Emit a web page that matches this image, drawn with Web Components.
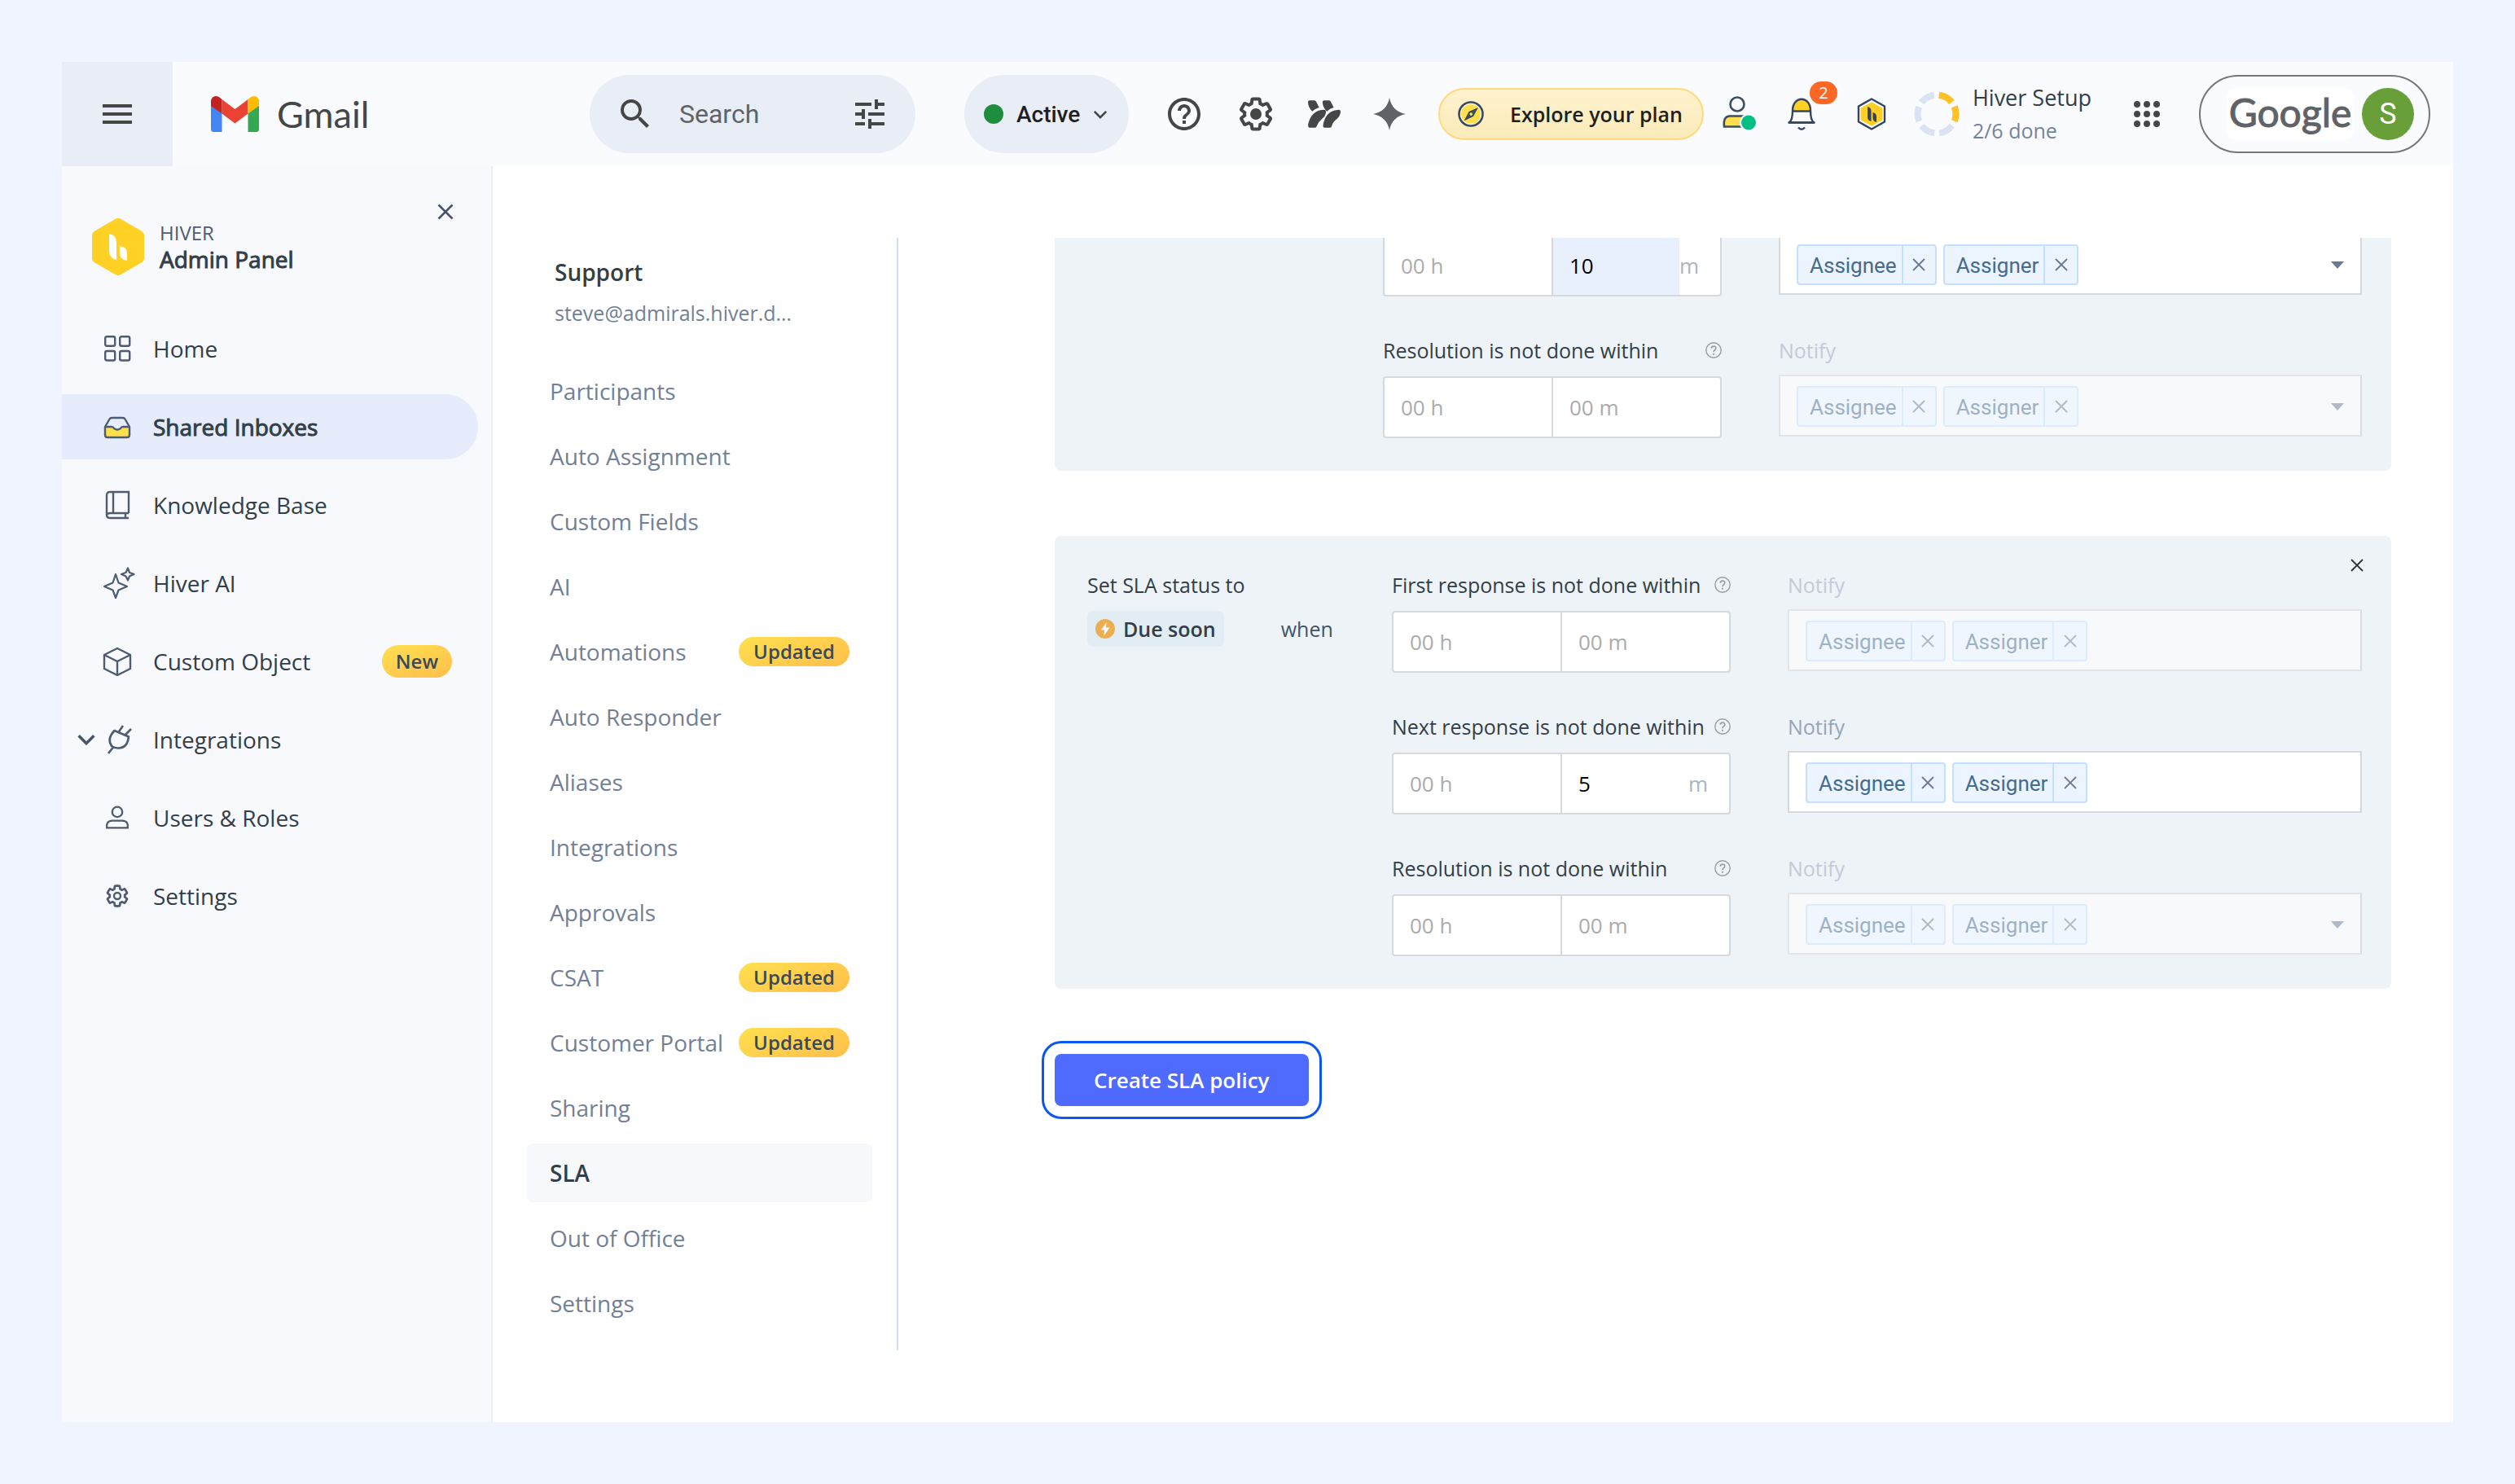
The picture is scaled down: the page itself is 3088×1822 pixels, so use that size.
<!DOCTYPE html>
<html lang="en">
<head>
<meta charset="utf-8">
<title>SLA - Hiver Admin Panel</title>
<style>
    html {
        height: 100%;
    }
    body {
        margin: 0;
        padding: 76px;
        min-height: 100%;
        box-sizing: border-box;
        display: flex;
        flex-direction: column;
        background: #eff4ff;
        font-family: "Open Sans", "Noto Sans", sans-serif;
        font-size: 28px;
        color: #333e48;
    }
</style>
</head>
<body>
<admin-app></admin-app>

<script>
const icons = {
    menu: ['0 0 36 24', '<path d="M0 0h36v4H0zM0 10h36v4H0zM0 20h36v4H0z" fill="currentColor"/>'],
    gmail: ['0 0 59 44', `
        <path d="M0 11v29.500q0 3.500 3.500 3.500H13.500V21z" fill="#4285f4"/>
        <path d="M59 11v29.500q0 3.500-3.500 3.500H45.500V21z" fill="#34a853"/>
        <path d="M13.500 4 29.500 16 45.500 4V21.500L29.500 33.500 13.500 21.500z" fill="#ea4335"/>
        <path d="M0 12V6.500C0 1 6-2 10.500 1.500L13.500 4V21.500z" fill="#c5221f"/>
        <path d="M59 12V6.500C59 1 53-2 48.500 1.500L45.500 4V21.500z" fill="#fbbc04"/>`],
    search: ['0 0 24 24', '<path fill="currentColor" d="M15.500 14h-.79l-.28-.27A6.471 6.471 0 0 0 16 9.500 6.500 6.500 0 1 0 9.500 16c1.610 0 3.090-.59 4.230-1.570l.27.28v.79l5 4.990L20.490 19l-4.990-5zm-6 0C7.010 14 5 11.990 5 9.500S7.010 5 9.500 5 14 7.010 14 9.500 11.990 14 9.500 14z"/>'],
    tune: ['0 0 24 24', '<path fill="currentColor" d="M3 17v2h6v-2H3zM3 5v2h10V5H3zm10 16v-2h8v-2h-8v-2h-2v6h2zM7 9v2H3v2h4v2h2V9H7zm14 4v-2H11v2h10zm-6-4h2V7h4V5h-4V3h-2v6z"/>'],
    chevron: ['0 0 20 12', '<path d="M2 2l8 8 8-8" fill="none" stroke="currentColor" stroke-width="3"/>'],
    help: ['0 0 24 24', '<path fill="currentColor" d="M11 18h2v-2h-2v2zm1-16C6.480 2 2 6.480 2 12s4.480 10 10 10 10-4.480 10-10S17.520 2 12 2zm0 18c-4.410 0-8-3.590-8-8s3.590-8 8-8 8 3.590 8 8-3.590 8-8 8zm0-14c-2.210 0-4 1.790-4 4h2c0-1.100.9-2 2-2s2 .9 2 2c0 2-3 1.750-3 5h2c0-2.250 3-2.500 3-5 0-2.210-1.790-4-4-4z"/>'],
    hint: ['0 0 20 20', '<circle cx="10" cy="10" r="9.200" fill="none" stroke="#9b9b9b" stroke-width="1.400"/><path d="M7.300 7.800C7.300 4.300 12.800 4.300 12.800 7.600 12.800 9.800 10 9.600 10 12.200" fill="none" stroke="#9b9b9b" stroke-width="1.600"/><circle cx="10" cy="14.800" r="1.100" fill="#9b9b9b"/>'],
    gear: ['0 0 24 24', '<path fill="currentColor" d="GEAR"/><circle cx="12" cy="12" r="3.500" fill="currentColor"/>'],
    settings: ['0 0 24 24', '<path fill="currentColor" d="GEAR"/><circle cx="12" cy="12" r="3" fill="none" stroke="currentColor" stroke-width="1.800"/>'],
    chevrons: ['0 0 38 32', `<g fill="currentColor">
        <path d="M0 2Q0 0 2 0H7.500Q9 0 9.500 1.500L13 8.500Q8.500 9.500 5 13Q0 8 0 2z"/>
        <path d="M17 2Q17 0 19 0H24.500Q26 0 26.500 1.500L30 8.500Q25.500 9.500 22 13Q17 8 17 2z"/>
        <path d="M1.500 32Q-1 31 1 25Q5 11.500 19 11Q22 11 20.500 16Q20 19 16 22Q12 25 10 30.500Q9.500 32 8 32z"/>
        <path d="M19 32Q16.500 31 18.500 25Q22 12 36 11Q38 11 38 13Q38 18 33.500 22Q29 25 27.500 30.500Q27 32 25.500 32z"/></g>`],
    spark: ['0 0 40 40', '<path fill="#5f6368" d="M20 0C22 11 29 18 40 20C29 22 22 29 20 40C18 29 11 22 0 20C11 18 18 11 20 0z"/>'],
    compass: ['0 0 32 32', '<circle cx="16" cy="16" r="14.500" fill="#fff" stroke="#3c4a5e" stroke-width="2.600"/><circle cx="16" cy="16" r="12" fill="#ffe04b"/><path fill="#3c4a5e" fill-rule="evenodd" d="M25 8L19 19 7.500 24.500 13.500 13zM16.200 14.200a1.800 1.800 0 1 0 .1 0z"/>'],
    person: ['0 0 48 48', `
        <circle cx="21" cy="12" r="8.500" fill="none" stroke="#3d4d63" stroke-width="2.600"/>
        <path d="M5 39.500Q3.500 26.500 12 26.500H30Q38 26.500 37 39.500z" fill="#ffe04b" stroke="#3d4d63" stroke-width="2.600"/>
        <circle cx="35" cy="34.500" r="11" fill="#f9fbff"/><circle cx="35" cy="34.500" r="9" fill="#03bf83"/>`],
    bell: ['0 0 40 40', `
        <path d="M9 16C9-3 31-3 31 16z" fill="#ffd124"/>
        <path d="M9 16C9-3 31-3 31 16Q31 27 35 30.500H5Q9 27 9 16zM9 16.500H31" fill="none" stroke="#34465f" stroke-width="2.400" stroke-linejoin="round"/>
        <path d="M3.500 30.500H36.500M16 36.500Q20 41 24 36.500" fill="none" stroke="#34465f" stroke-width="2.400"/>`],
    hexline: ['0 0 38 42', `
        <path d="M19 2.500L35 11.500V30.500L19 39.500L3 30.500V11.500z" fill="#fff" stroke="#34465f" stroke-width="2.400" stroke-linejoin="round"/>
        <path d="M19 8L31 14.500V27.500L19 34L7 27.500V14.500z" fill="#ffcf24" stroke="#ffcf24" stroke-width="3" stroke-linejoin="round"/>
        <path d="M14 12Q18.500 13 18.500 17V30Q14 29 14 25zM20.500 19Q25 20 25 24V31Q20.500 30 20.500 26z" fill="#34465f"/>`],
    hiver: ['0 0 66 70', `
        <path d="M33 7L58 21.500V48.500L33 63L8 48.500V21.500z" fill="#ffd124" stroke="#ffd124" stroke-width="14" stroke-linejoin="round"/>
        <path d="M22 19Q31 20 31 31V51Q22 49 22 40zM35 34Q44 35 44 43V52Q35 51 35 43z" fill="#fff"/>`],
    ring: ['0 0 56 56', `<g fill="none" stroke-width="8" transform="rotate(-83 28 28)">
        <circle cx="28" cy="28" r="23.500" pathLength="60" stroke="#dae2f3" stroke-dasharray="7.500 2.500"/>
        <circle cx="28" cy="28" r="23.500" pathLength="60" stroke="#ffc224" stroke-dasharray="7.500 2.500 7.500 42.500"/></g>`],
    apps: ['0 0 32 32', '<g fill="currentColor">' + [4, 16, 28].map(y => [4, 16, 28].map(x => `<circle cx="${x}" cy="${y}" r="4"/>`).join('')).join('') + '</g>'],
    close: ['0 0 20 20', '<path d="M1.500 1.500l17 17M18.500 1.500l-17 17" stroke="currentColor" stroke-width="2.600"/>'],
    thin: ['0 0 16 16', '<path d="M1 1l14 14M15 1L1 15" stroke="currentColor" stroke-width="1.800"/>'],
    home: ['0 0 36 36', '<g fill="none" stroke="currentColor" stroke-width="2.400"><rect x="3.200" y="3.200" width="12" height="11.500" rx="2"/><rect x="21.200" y="3.200" width="12" height="11.500" rx="2"/><rect x="3.200" y="21" width="12" height="11.500" rx="2"/><rect x="21.200" y="21" width="12" height="11.500" rx="2"/></g>'],
    inbox: ['0 0 36 36', '<path d="M3 18h9q2 4 6 4t6-4h9v10q0 3-3 3H6q-3 0-3-3z" fill="#ffe04b"/><path d="M3 18L8.500 8.500Q9.500 7 11 7H25Q26.500 7 27.500 8.500L33 18V28Q33 31 30 31H6Q3 31 3 28zM3 18h8q2 0 3 2 4 3 8 0 1-2 3-2h8" fill="none" stroke="currentColor" stroke-width="2.400" stroke-linejoin="round"/>'],
    book: ['0 0 36 36', '<path d="M32 28V2H9Q5 2 5 6V30Q5 34 9 34H32M32 28H9Q5 28 5 31M13 2V28M28 28V34" fill="none" stroke="currentColor" stroke-width="2.400"/>'],
    sparkles: ['0 0 40 40', '<g fill="none" stroke="currentColor" stroke-width="2.200" stroke-linejoin="round"><path d="M16 9L19.500 19.500 30 24 19.500 28.500 16 38 12.500 28.500 2 24 12.500 19.500z"/><path d="M31 1.500L33 7 38.500 9 33 11.500 31 16.500 28.500 11.500 23 9 28.500 7z"/></g>'],
    box: ['0 0 36 36', '<path d="M18 2L34 10V27L18 35L2 27V10zM2 10L18 18L34 10M18 18V35" fill="none" stroke="currentColor" stroke-width="2.400" stroke-linejoin="round"/>'],
    plug: ['0 0 36 36', '<path d="M14.500 7L32 14.500Q30.500 28 20 28.500Q15 29 11 26Q5 17 14.500 7zM19.500 9L25 1M28 12L35 5M13 27.500L7 35" fill="none" stroke="currentColor" stroke-width="2.600" stroke-linejoin="round"/>'],
    user: ['0 0 36 36', '<g fill="none" stroke="currentColor" stroke-width="2.600"><circle cx="18" cy="10" r="7"/><path d="M3.500 32Q2.500 22 11 22H25Q33.500 22 32.500 32z" stroke-linejoin="round"/></g>'],
    bolt: ['0 0 24 24', '<circle cx="12" cy="12" r="12" fill="#edae52"/><path d="M13.500 4L7 13.500H11L10.500 20.500L17.500 10.500H13z" fill="#fff"/>'],
    caret: ['0 0 16 9', '<path d="M0 0h16L8 9z" fill="currentColor"/>'],
};

const gearPath = 'M13.850 22.250h-3.700c-.74 0-1.360-.54-1.450-1.270l-.27-1.890c-.27-.14-.53-.29-.79-.46l-1.800.72c-.7.26-1.470-.03-1.810-.65L2.200 15.530c-.35-.66-.2-1.440.36-1.880l1.530-1.190c-.01-.15-.02-.3-.02-.46 0-.15.010-.31.020-.46l-1.520-1.190c-.59-.45-.74-1.260-.37-1.880l1.850-3.190c.34-.62 1.110-.9 1.790-.63l1.810.73c.26-.17.52-.32.78-.46l.27-1.910c.09-.7.71-1.250 1.440-1.250h3.700c.74 0 1.360.54 1.450 1.270l.27 1.890c.27.14.53.29.79.46l1.800-.72c.71-.26 1.480.03 1.820.65l1.840 3.180c.36.66.2 1.440-.36 1.880l-1.520 1.190c.01.15.02.3.02.46s-.01.31-.02.46l1.520 1.190c.56.45.72 1.230.37 1.860l-1.860 3.220c-.34.62-1.110.9-1.800.63l-1.800-.72c-.26.17-.52.32-.78.46l-.27 1.910c-.1.68-.72 1.220-1.460 1.220zm-3.230-2h2.760l.37-2.550.53-.22c.44-.18.88-.44 1.340-.78l.45-.34 2.380.96 1.380-2.400-2.030-1.580.07-.56c.03-.26.06-.51.06-.78s-.03-.53-.06-.78l-.07-.56 2.030-1.580-1.390-2.400-2.390.96-.45-.35c-.42-.32-.87-.58-1.330-.77l-.52-.22-.37-2.550h-2.760l-.37 2.550-.53.21c-.44.19-.88.44-1.340.79l-.45.33-2.380-.95-1.390 2.390 2.030 1.580-.07.56a7 7 0 0 0-.06.79c0 .26.02.53.06.78l.07.56-2.030 1.580 1.380 2.400 2.390-.96.45.35c.43.33.86.58 1.330.77l.53.22.38 2.550z';

function icon(name, width, height = width) {
    const [box, body] = icons[name];
    return `<svg class="icon" width="${width}" height="${height}" viewBox="${box}" aria-hidden="true">${body.replace('GEAR', gearPath)}</svg>`;
}

// shared by every shadow root
const baseStyle = `
    * { box-sizing: border-box; }
    svg { display: block; flex: none; }
    a { color: inherit; text-decoration: none; }
    button {
        margin: 0;
        padding: 0;
        border: 0;
        background: none;
        color: inherit;
        font: inherit;
        cursor: pointer;
    }
`;

class BaseElement extends HTMLElement {
    connectedCallback() {
        if (this.shadowRoot) return;
        this.attachShadow({mode: 'open'}).innerHTML = `<style>${baseStyle}${this.styles()}</style>${this.render()}`;
    }
}

customElements.define('pill-badge', class extends BaseElement {
    styles() {
        return `
        :host {
            display: block;
            flex: none;
            padding: 0 18px;
            border-radius: 20px;
            background: linear-gradient(160deg, #ffe04f, #ffbf4a);
            color: #3a4a58;
            font-size: 24px;
            font-weight: 600;
            line-height: 36px;
        }
        :host([tall]) {
            padding: 0 17px;
            line-height: 40px;
        }`;
    }
    render() {
        return `<slot></slot>`;
    }
});

customElements.define('app-header', class extends BaseElement {
    styles() {
        return `
        :host {
            display: flex;
            align-items: center;
            height: 128px;
            padding-right: 28px;
            background: #f9fbff;
            color: #444746;
            font-family: Roboto, sans-serif;
        }
        .menu {
            width: 136px;
            height: 128px;
            background: #e9eef6;
            display: grid;
            place-items: center;
        }
        .logo {
            flex: 1;
            display: flex;
            align-items: center;
            gap: 22px;
            padding-left: 47px;
            font: 45px Lato, sans-serif;
        }
        .search {
            width: 400px;
            height: 96px;
            display: flex;
            align-items: center;
            padding: 0 32px;
            border-radius: 48px;
            background: #e9eef6;
        }
        .search input {
            flex: 1;
            min-width: 0;
            margin-left: 30px;
            padding: 0;
            border: 0;
            background: none;
            font: 32px Roboto, sans-serif;
        }
        .search input::placeholder { color: #5f6368; opacity: 1; }
        .status {
            height: 96px;
            width: 202px;
            margin-left: 60px;
            padding: 0 24px;
            display: flex;
            align-items: center;
            gap: 16px;
            border-radius: 48px;
            background: #e9eef6;
            color: #1f1f1f;
            font-weight: 500;
            font-size: 28px;
        }
        .status i {
            width: 24px;
            height: 24px;
            border-radius: 50%;
            background: #1e8e3e;
        }
        .status svg { color: #444746; }
        .tools {
            display: flex;
            align-items: center;
            gap: 40px;
            margin-left: 44px;
        }
        .plan {
            height: 64px;
            padding: 0 24px 0 22px;
            display: flex;
            align-items: center;
            gap: 32px;
            border: 2px solid #ffd97c;
            border-radius: 32px;
            background: linear-gradient(#fff2ce, #fbebb9);
            color: #1f1f1f;
            font: 600 25px "Open Sans", sans-serif;
        }
        .extras {
            display: flex;
            align-items: center;
            gap: 32px;
            margin: 0 52px 0 20px;
        }
        .bell {
            position: relative;
            margin-right: 14px;
        }
        .bell span {
            position: absolute;
            left: 30px;
            top: -20px;
            width: 34px;
            border-radius: 14px;
            background: #fd6726;
            color: #fff;
            font: 20px/28px "Open Sans", sans-serif;
            text-align: center;
        }
        .setup {
            display: flex;
            align-items: center;
            gap: 16px;
            font: 27px/40px "Open Sans", sans-serif;
            color: #333e48;
        }
        .setup small {
            display: block;
            font-size: 25px;
            color: #75839b;
        }
        .account {
            height: 96px;
            margin-left: 48px;
            padding: 0 18px 0 32px;
            display: flex;
            align-items: center;
            gap: 10px;
            border: 2px solid #757775;
            border-radius: 48px;
        }
        .brand {
            width: 156px;
            height: 64px;
            border-radius: 12px;
            background: #fff;
            color: #5f6368;
            font: 48px/60px Lato, sans-serif;
            -webkit-text-stroke: 1px #5f6368;
            text-align: center;
        }
        .avatar {
            width: 64px;
            border-radius: 50%;
            background: #689f38;
            color: #fff;
            font-size: 36px;
            line-height: 64px;
            text-align: center;
        }`;
    }
    render() {
        return `
        <button class="menu" aria-label="Main menu">${icon('menu', 36, 24)}</button>
        <a class="logo" href="#">${icon('gmail', 59, 44)}<span>Gmail</span></a>
        <form class="search" role="search">
            ${icon('search', 48)}
            <input type="text" placeholder="Search" aria-label="Search">
            <button type="button" aria-label="Search options">${icon('tune', 48)}</button>
        </form>
        <button class="status"><i></i>Active${icon('chevron', 18, 11)}</button>
        <div class="tools">
            <button aria-label="Support">${icon('help', 48)}</button>
            <button aria-label="Settings">${icon('gear', 48)}</button>
            <button aria-label="Shortcuts">${icon('chevrons', 40, 34)}</button>
            <button aria-label="Ask AI">${icon('spark', 40)}</button>
            <button class="plan">${icon('compass', 32)}Explore your plan</button>
        </div>
        <div class="extras">
            <button aria-label="Profile">${icon('person', 48)}</button>
            <button class="bell" aria-label="Notifications">${icon('bell', 40)}<span>2</span></button>
            <button aria-label="Hiver">${icon('hexline', 40, 42)}</button>
            <div class="setup">${icon('ring', 56)}<div>Hiver Setup<small>2/6 done</small></div></div>
        </div>
        <button aria-label="Google apps">${icon('apps', 32)}</button>
        <a class="account" href="#"><span class="brand">Google</span><span class="avatar">S</span></a>`;
    }
});

customElements.define('nav-item', class extends BaseElement {
    styles() {
        return `
        :host { display: block; }
        a {
            display: flex;
            align-items: center;
            height: 80px;
            padding: 0 32px 0 16px;
            margin-right: 16px;
            border-radius: 0 40px 40px 0;
            color: #333e48;
        }
        :host([active]) a {
            background: #e6ecfc;
            -webkit-text-stroke: 1px;
        }
        .toggle { width: 34px; color: #46536a; }
        .glyph {
            width: 36px;
            display: grid;
            place-items: center;
            color: #4e5b70;
        }
        .label { flex: 1; margin-left: 26px; }`;
    }
    render() {
        const name = this.getAttribute('icon');
        const size = name === 'sparkles' ? 40 : name === 'settings' || name === 'user' ? 32 : 36;
        return `
        <a href="#">
            <span class="toggle">${this.hasAttribute('expandable') ? icon('chevron', 28, 14) : ''}</span>
            <span class="glyph">${icon(name, size)}</span>
            <span class="label"><slot></slot></span>
            <slot name="badge"></slot>
        </a>`;
    }
});

customElements.define('side-bar', class extends BaseElement {
    styles() {
        return `
        :host {
            display: block;
            flex: none;
            width: 529px;
            padding-top: 36px;
            border-right: 2px solid #e9eef8;
            background: #f7f9fd;
        }
        header {
            display: flex;
            align-items: flex-start;
            gap: 18px;
            padding: 0 36px;
        }
        header svg { margin-top: 28px; }
        .title {
            flex: 1;
            margin-top: 30px;
            line-height: 32px;
            -webkit-text-stroke: 1px;
        }
        .title small {
            display: block;
            font-size: 24px;
            color: #4e5b70;
            -webkit-text-stroke: 0;
        }
        header button {
            width: 40px;
            height: 40px;
            display: grid;
            place-items: center;
            color: #46536a;
        }
        header button svg { margin: 0; }
        nav {
            display: grid;
            gap: 16px;
            margin-top: 50px;
        }`;
    }
    render() {
        return `
        <header>
            ${icon('hiver', 66, 70)}
            <div class="title"><small>HIVER</small>Admin Panel</div>
            <button aria-label="Close panel">${icon('close', 20)}</button>
        </header>
        <nav>
            <nav-item icon="home">Home</nav-item>
            <nav-item icon="inbox" active>Shared Inboxes</nav-item>
            <nav-item icon="book">Knowledge Base</nav-item>
            <nav-item icon="sparkles">Hiver AI</nav-item>
            <nav-item icon="box">Custom Object<pill-badge slot="badge" tall>New</pill-badge></nav-item>
            <nav-item icon="plug" expandable>Integrations</nav-item>
            <nav-item icon="user">Users &amp; Roles</nav-item>
            <nav-item icon="settings">Settings</nav-item>
        </nav>`;
    }
});

customElements.define('inbox-link', class extends BaseElement {
    styles() {
        return `
        :host { display: block; }
        a {
            display: flex;
            align-items: center;
            justify-content: space-between;
            height: 72px;
            padding: 0 28px;
            border-radius: 8px;
            color: #728097;
            white-space: nowrap;
        }
        :host([active]) a {
            background: #f6f8fc;
            color: #333e48;
            font-weight: 600;
        }`;
    }
    render() {
        return `<a href="#"><span><slot></slot></span><slot name="badge"></slot></a>`;
    }
});

customElements.define('inbox-menu', class extends BaseElement {
    styles() {
        return `
        :host {
            display: block;
            flex: none;
            width: 456px;
            margin-left: 42px;
            padding-right: 30px;
            border-right: 2px solid #d3ddec;
        }
        header {
            padding: 22px 0 44px 34px;
            font-weight: 600;
            line-height: 40px;
        }
        header small {
            display: block;
            margin-top: 14px;
            font-size: 25px;
            font-weight: 400;
            line-height: 32px;
            color: #728097;
        }
        nav { display: grid; gap: 8px; }`;
    }
    render() {
        const updated = '<pill-badge slot="badge">Updated</pill-badge>';
        return `
        <header>Support<small>steve@admirals.hiver.d…</small></header>
        <nav>
            <inbox-link>Participants</inbox-link>
            <inbox-link>Auto Assignment</inbox-link>
            <inbox-link>Custom Fields</inbox-link>
            <inbox-link>AI</inbox-link>
            <inbox-link>Automations${updated}</inbox-link>
            <inbox-link>Auto Responder</inbox-link>
            <inbox-link>Aliases</inbox-link>
            <inbox-link>Integrations</inbox-link>
            <inbox-link>Approvals</inbox-link>
            <inbox-link>CSAT${updated}</inbox-link>
            <inbox-link>Customer Portal${updated}</inbox-link>
            <inbox-link>Sharing</inbox-link>
            <inbox-link active>SLA</inbox-link>
            <inbox-link>Out of Office</inbox-link>
            <inbox-link>Settings</inbox-link>
        </nav>`;
    }
});

customElements.define('time-field', class extends BaseElement {
    styles() {
        return `
        :host { display: block; }
        .head {
            height: 32px;
            margin-bottom: 16px;
            display: flex;
            align-items: center;
            justify-content: space-between;
            font-size: 25px;
            line-height: 32px;
            white-space: nowrap;
        }
        .box {
            display: flex;
            height: 76px;
            border: 2px solid #d5d8dc;
            border-radius: 4px;
            background: #fff;
        }
        .cell {
            flex: 1 1 0;
            min-width: 0;
            display: flex;
            align-items: center;
        }
        .cell + .cell { border-left: 2px solid #d5d8dc; }
        input {
            flex: 1 1 0;
            width: 0;
            min-width: 0;
            height: 100%;
            padding: 0 20px;
            border: 0;
            background: none;
            font: 26px "Open Sans", sans-serif;
            color: #000;
        }
        input::placeholder { color: #ababab; opacity: 1; }
        :host([filled]) .minutes input { background: #e8f0fe; }
        .unit {
            padding-right: 26px;
            font-size: 26px;
            color: #a9b5c1;
        }`;
    }
    render() {
        const label = this.getAttribute('label');
        const minutes = this.getAttribute('minutes');
        return `
        <div class="head">${label ? `<label for="hours">${label}</label>${icon('hint', 20)}` : ''}</div>
        <div class="box">
            <div class="cell"><input id="hours" type="text" placeholder="00 h" aria-label="Hours"></div>
            <div class="cell minutes"><input type="text" placeholder="00 m" aria-label="Minutes" value="${minutes || ''}">${minutes ? '<span class="unit">m</span>' : ''}</div>
        </div>`;
    }
});

customElements.define('notify-field', class extends BaseElement {
    styles() {
        return `
        :host { display: block; min-width: 0; }
        .head {
            height: 32px;
            margin-bottom: 14px;
            font-size: 25px;
            line-height: 32px;
            color: #98a4b9;
        }
        .box {
            display: flex;
            align-items: center;
            gap: 8px;
            height: 76px;
            padding: 2px 20px 0;
            border: 2px solid #d5d8dc;
            background: #fff;
            color: #6b7a94;
        }
        :host([disabled]) .head { color: #c3cbd8; }
        :host([disabled]) .box {
            border-color: #e1e4e8 #d8dbdf #e1e4e8 #e1e4e8;
            background: #f7f9fb;
        }
        :host([disabled]) .chip,
        :host([disabled]) .caret { opacity: 0.5; }
        .chip {
            display: flex;
            height: 50px;
            border: 2px solid #c2e0ff;
            border-radius: 4px;
            background: #ebf4ff;
            color: #456b8e;
            font: 26px/48px Roboto, sans-serif;
        }
        .chip span { padding: 0 6px 0 14px; }
        .chip button {
            width: 41px;
            display: grid;
            place-items: center;
            border-left: 2px solid #c2e0ff;
            color: #6b7a94;
        }
        .caret { margin-left: auto; }`;
    }
    render() {
        const chip = name => `<div class="chip"><span>${name}</span><button aria-label="Remove ${name}">${icon('thin', 16)}</button></div>`;
        return `
        <div class="head">${this.getAttribute('label') || ''}</div>
        <div class="box" role="group" aria-label="Notify">
            ${chip('Assignee')}${chip('Assigner')}
            ${this.hasAttribute('caret') ? `<div class="caret">${icon('caret', 16, 9)}</div>` : ''}
        </div>`;
    }
});

customElements.define('sla-card', class extends BaseElement {
    styles() {
        return `
        :host {
            position: relative;
            display: grid;
            grid-template-columns: 374px 1fr;
            padding: 44px 36px 40px 40px;
            border-radius: 8px;
            background: #edf3f6;
        }
        /* scrolled part way out of the top of the pane */
        :host([scrolled]) {
            grid-template-columns: 363px 1fr;
            margin-top: -52px;
            padding-top: 0;
        }
        .rows {
            display: grid;
            grid-template-columns: 416px 1fr;
            gap: 50px 70px;
        }
        .close {
            position: absolute;
            right: 34px;
            top: 28px;
        }
        .close svg { color: #333; }`;
    }
    render() {
        return `
        <div><slot name="status"></slot></div>
        <div class="rows"><slot></slot></div>
        ${this.hasAttribute('closable') ? `<button class="close" aria-label="Remove condition">${icon('thin', 16)}</button>` : ''}`;
    }
});

customElements.define('sla-status', class extends BaseElement {
    styles() {
        return `
        :host {
            display: block;
            font-size: 25px;
            line-height: 32px;
        }
        .line {
            display: flex;
            align-items: center;
            gap: 70px;
            margin-top: 16px;
            color: #43536a;
        }
        .tag {
            display: flex;
            align-items: center;
            gap: 10px;
            height: 44px;
            padding: 0 10px;
            border-radius: 8px;
            background: #e1ecf3;
            color: #333e48;
            font-weight: 600;
        }`;
    }
    render() {
        return `Set SLA status to
        <div class="line"><span class="tag">${icon('bolt', 24)}<slot></slot></span>when</div>`;
    }
});

customElements.define('sla-editor', class extends BaseElement {
    styles() {
        return `
        :host {
            display: flex;
            flex-direction: column;
            align-items: stretch;
            gap: 80px;
            flex: 1;
            min-width: 0;
            padding: 0 76px 0 192px;
            overflow: hidden;
        }
        .submit {
            align-self: flex-start;
            height: 64px;
            padding: 0 48px;
            border-radius: 8px;
            outline: 3px solid #0b57f0;
            outline-offset: 13px;
            background: #4f6bff;
            color: #fff;
            font-size: 26px;
            font-weight: 600;
        }`;
    }
    render() {
        return `
        <sla-card scrolled>
            <time-field minutes="10" filled></time-field>
            <notify-field caret></notify-field>
            <time-field label="Resolution is not done within"></time-field>
            <notify-field label="Notify" caret disabled></notify-field>
        </sla-card>
        <sla-card closable>
            <sla-status slot="status">Due soon</sla-status>
            <time-field label="First response is not done within"></time-field>
            <notify-field label="Notify" disabled></notify-field>
            <time-field label="Next response is not done within" minutes="5"></time-field>
            <notify-field label="Notify"></notify-field>
            <time-field label="Resolution is not done within"></time-field>
            <notify-field label="Notify" caret disabled></notify-field>
        </sla-card>
        <button class="submit">Create SLA policy</button>`;
    }
});

customElements.define('admin-app', class extends BaseElement {
    styles() {
        return `
        :host {
            flex: 1;
            display: flex;
            flex-direction: column;
            background: #fff;
        }
        .body { flex: 1; display: flex; }
        main {
            flex: 1;
            min-width: 0;
            display: flex;
            padding: 88px 0;
        }`;
    }
    render() {
        return `
        <app-header></app-header>
        <div class="body">
            <side-bar></side-bar>
            <main>
                <inbox-menu></inbox-menu>
                <sla-editor></sla-editor>
            </main>
        </div>`;
    }
});
</script>
</body>
</html>
